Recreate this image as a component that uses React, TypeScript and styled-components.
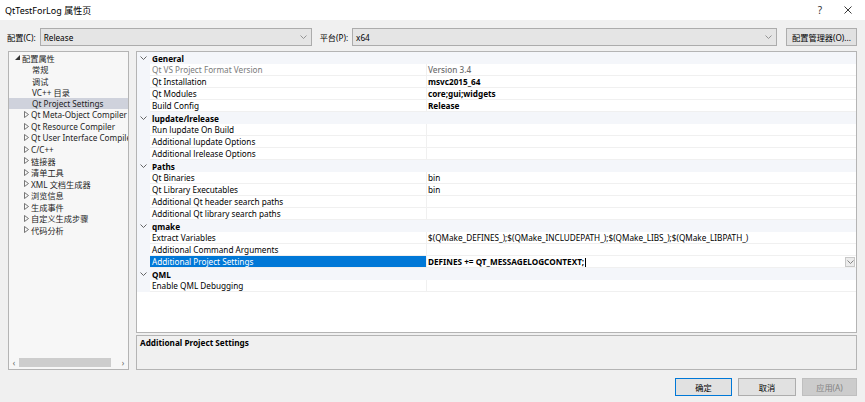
import React from 'react';
import styled, { createGlobalStyle } from 'styled-components';

const Global = createGlobalStyle`
  html, body { margin: 0; padding: 0; }
  body { background: #f0f0f0; font-family: "Noto Sans", "Noto Sans CJK SC", sans-serif; }
`;

const FONT = `"Noto Sans", "Noto Sans CJK SC", sans-serif`;

const Window = styled.div`
  width: 865px;
  height: 402px;
  background: #f0f0f0;
  display: flex;
  flex-direction: column;
  overflow: hidden;
  font-family: ${FONT};
  font-size: 8.2px;
  color: #000;
`;

const TitleBar = styled.div`
  height: 20px;
  background: #fff;
  display: flex;
  align-items: center;
  padding: 0 3px 0 5px;
  font-size: 9px;
`;
const Title = styled.div`flex: 1;`;
const TitleBtn = styled.div`
  width: 28px;
  display: flex;
  align-items: center;
  justify-content: center;
  color: #333;
  font-size: 10px;
`;

const ConfigRow = styled.div`
  margin-top: 8px;
  height: 18px;
  display: flex;
  align-items: center;
  padding: 0 8px 0 7px;
`;
const FieldLabel = styled.span<{ $ml?: number }>`
  margin-left: ${p => p.$ml ?? 0}px;
  margin-right: 4px;
  white-space: nowrap;
`;
const Combo = styled.div<{ $w?: number }>`
  ${p => (p.$w ? `width: ${p.$w}px;` : 'flex: 1;')}
  height: 18px;
  box-sizing: border-box;
  background: #e5e5e5;
  border: 1px solid #acacac;
  display: flex;
  align-items: center;
  justify-content: space-between;
  padding: 0 4px 0 3px;
`;
const Button = styled.div<{ $w: number; $ml?: number; $variant?: 'default' | 'primary' | 'disabled' }>`
  width: ${p => p.$w}px;
  margin-left: ${p => p.$ml ?? 0}px;
  height: 18px;
  box-sizing: border-box;
  display: flex;
  align-items: center;
  justify-content: center;
  background: ${p => (p.$variant === 'disabled' ? '#cccccc' : '#e1e1e1')};
  border: 1px solid ${p => (p.$variant === 'primary' ? '#0078d7' : p.$variant === 'disabled' ? '#bfbfbf' : '#adadad')};
  color: ${p => (p.$variant === 'disabled' ? '#838383' : '#000')};
  white-space: nowrap;
`;

const Main = styled.div`
  margin-top: 5px;
  height: 319px;
  display: flex;
  gap: 7px;
  padding: 0 8px;
`;

const Tree = styled.div`
  width: 121px;
  box-sizing: border-box;
  border: 1px solid #b4b4b4;
  background: #f7f7f7;
  display: flex;
  flex-direction: column;
  overflow: hidden;
`;
const TreeList = styled.div`
  flex: 1;
  overflow: hidden;
`;
const TreeItem = styled.div<{ $indent: number; $selected?: boolean }>`
  height: 11.46px;
  display: flex;
  align-items: center;
  padding-left: ${p => p.$indent}px;
  white-space: nowrap;
  background: ${p => (p.$selected ? '#cfd2dc' : 'transparent')};
  color: #1e1e1e;
`;
const Expander = styled.span`
  width: 7px;
  display: inline-flex;
  align-items: center;
  justify-content: flex-start;
  flex-shrink: 0;
`;
const HScroll = styled.div`
  height: 11px;
  margin: 0 0 1px 0;
  display: flex;
  align-items: center;
  color: #606060;
  font-size: 8px;
`;
const ScrollArrow = styled.span`
  width: 10px;
  display: flex;
  justify-content: center;
`;
const ScrollTrack = styled.div`
  flex: 1;
  height: 9px;
  display: flex;
`;
const ScrollThumb = styled.div`
  width: 92px;
  height: 9px;
  background: #cdcdcd;
`;

const RightCol = styled.div`
  flex: 1;
  display: flex;
  flex-direction: column;
  gap: 2px;
`;
const Grid = styled.div`
  height: 282px;
  box-sizing: border-box;
  border: 1px solid #b4b4b4;
  background: #fff;
  overflow: hidden;
`;
const Row = styled.div<{ $cat?: boolean }>`
  height: 12px;
  display: grid;
  grid-template-columns: 13px 277px 1fr;
  background: ${p => (p.$cat ? '#f4f6fa' : '#fff')};
`;
const Gutter = styled.div`
  background: #f4f6fa;
  display: flex;
  align-items: center;
  justify-content: center;
`;
const CatName = styled.div`
  grid-column: 2 / 4;
  display: flex;
  align-items: center;
  padding-left: 2px;
  font-weight: 700;
`;
const NameCell = styled.div<{ $sel?: boolean; $dim?: boolean }>`
  display: flex;
  align-items: center;
  padding-left: 2px;
  white-space: nowrap;
  box-sizing: border-box;
  border-bottom: 1px solid #f0f0f0;
  border-right: 1px solid #f0f0f0;
  background: ${p => (p.$sel ? '#0078d7' : 'transparent')};
  color: ${p => (p.$sel ? '#fff' : p.$dim ? '#7a7a7a' : '#000')};
`;
const ValueCell = styled.div<{ $bold?: boolean; $dim?: boolean }>`
  display: flex;
  align-items: center;
  justify-content: space-between;
  padding-left: 1px;
  white-space: nowrap;
  box-sizing: border-box;
  border-bottom: 1px solid #f0f0f0;
  font-weight: ${p => (p.$bold ? 700 : p.$dim ? 500 : 400)};
  color: ${p => (p.$dim ? '#6d6d6d' : '#000')};
`;
const Caret = styled.span`
  display: inline-block;
  width: 1px;
  height: 9px;
  background: #000;
  margin-left: 1px;
  vertical-align: middle;
`;
const DropBtn = styled.div`
  width: 10px;
  height: 10px;
  margin-right: 1px;
  box-sizing: border-box;
  border: 1px solid #c8c8c8;
  background: #ececec;
  display: flex;
  align-items: center;
  justify-content: center;
`;

const Desc = styled.div`
  height: 35px;
  box-sizing: border-box;
  border: 1px solid #b4b4b4;
  background: #f0f0f0;
  padding: 1px 3px;
  font-weight: 700;
`;

const Footer = styled.div`
  margin-top: 8px;
  display: flex;
  justify-content: flex-end;
  gap: 6px;
  padding-right: 8px;
`;

const Chevron = ({ color = '#8a8a8a' }: { color?: string }) => (
  <svg width="7" height="4" viewBox="0 0 7 4">
    <path d="M0.5 0.5 L3.5 3.5 L6.5 0.5" fill="none" stroke={color} strokeWidth="0.9" />
  </svg>
);

const TriOpen = () => (
  <svg width="5" height="5" viewBox="0 0 5 5">
    <path d="M5 0 L5 5 L0 5 Z" fill="#333" />
  </svg>
);
const TriClosed = () => (
  <svg width="5" height="7" viewBox="0 0 5 7">
    <path d="M0.5 0.5 L4.5 3.5 L0.5 6.5 Z" fill="none" stroke="#555" strokeWidth="0.8" />
  </svg>
);

type TreeNode = { label: string; indent: number; exp?: 'open' | 'closed'; selected?: boolean };
const treeNodes: TreeNode[] = [
  { label: '配置属性', indent: 6, exp: 'open' },
  { label: '常规', indent: 23 },
  { label: '调试', indent: 23 },
  { label: 'VC++ 目录', indent: 23 },
  { label: 'Qt Project Settings', indent: 23, selected: true },
  { label: 'Qt Meta-Object Compiler', indent: 15, exp: 'closed' },
  { label: 'Qt Resource Compiler', indent: 15, exp: 'closed' },
  { label: 'Qt User Interface Compiler', indent: 15, exp: 'closed' },
  { label: 'C/C++', indent: 15, exp: 'closed' },
  { label: '链接器', indent: 15, exp: 'closed' },
  { label: '清单工具', indent: 15, exp: 'closed' },
  { label: 'XML 文档生成器', indent: 15, exp: 'closed' },
  { label: '浏览信息', indent: 15, exp: 'closed' },
  { label: '生成事件', indent: 15, exp: 'closed' },
  { label: '自定义生成步骤', indent: 15, exp: 'closed' },
  { label: '代码分析', indent: 15, exp: 'closed' },
];

type Prop = { name: string; value?: string; bold?: boolean; dim?: boolean; selected?: boolean };
type Cat = { title: string; props: Prop[] };
const cats: Cat[] = [
  {
    title: 'General',
    props: [
      { name: 'Qt VS Project Format Version', value: 'Version 3.4', dim: true },
      { name: 'Qt Installation', value: 'msvc2015_64', bold: true },
      { name: 'Qt Modules', value: 'core;gui;widgets', bold: true },
      { name: 'Build Config', value: 'Release', bold: true },
    ],
  },
  {
    title: 'lupdate/lrelease',
    props: [
      { name: 'Run lupdate On Build' },
      { name: 'Additional lupdate Options' },
      { name: 'Additional lrelease Options' },
    ],
  },
  {
    title: 'Paths',
    props: [
      { name: 'Qt Binaries', value: 'bin' },
      { name: 'Qt Library Executables', value: 'bin' },
      { name: 'Additional Qt header search paths' },
      { name: 'Additional Qt library search paths' },
    ],
  },
  {
    title: 'qmake',
    props: [
      { name: 'Extract Variables', value: '$(QMake_DEFINES_);$(QMake_INCLUDEPATH_);$(QMake_LIBS_);$(QMake_LIBPATH_)' },
      { name: 'Additional Command Arguments' },
      { name: 'Additional Project Settings', value: 'DEFINES += QT_MESSAGELOGCONTEXT;', bold: true, selected: true },
    ],
  },
  {
    title: 'QML',
    props: [{ name: 'Enable QML Debugging' }],
  },
];

export default function App() {
  return (
    <Window>
      <Global />
      <TitleBar>
        <Title>QtTestForLog 属性页</Title>
        <TitleBtn>?</TitleBtn>
        <TitleBtn>
          <svg width="8" height="8" viewBox="0 0 8 8">
            <path d="M0.5 0.5 L7.5 7.5 M7.5 0.5 L0.5 7.5" stroke="#222" strokeWidth="0.9" />
          </svg>
        </TitleBtn>
      </TitleBar>

      <ConfigRow>
        <FieldLabel>配置(C):</FieldLabel>
        <Combo $w={272}>
          <span>Release</span>
          <Chevron />
        </Combo>
        <FieldLabel $ml={8}>平台(P):</FieldLabel>
        <Combo>
          <span>x64</span>
          <Chevron />
        </Combo>
        <Button $w={71} $ml={9}>配置管理器(O)...</Button>
      </ConfigRow>

      <Main>
        <Tree>
          <TreeList>
            {treeNodes.map(n => (
              <TreeItem key={n.label} $indent={n.indent} $selected={n.selected}>
                {n.exp && <Expander>{n.exp === 'open' ? <TriOpen /> : <TriClosed />}</Expander>}
                {n.label}
              </TreeItem>
            ))}
          </TreeList>
          <HScroll>
            <ScrollArrow>‹</ScrollArrow>
            <ScrollTrack>
              <ScrollThumb />
            </ScrollTrack>
            <ScrollArrow>›</ScrollArrow>
          </HScroll>
        </Tree>

        <RightCol>
          <Grid>
            {cats.map(c => (
              <React.Fragment key={c.title}>
                <Row $cat>
                  <Gutter>
                    <Chevron color="#555" />
                  </Gutter>
                  <CatName>{c.title}</CatName>
                </Row>
                {c.props.map(p => (
                  <Row key={p.name}>
                    <Gutter />
                    <NameCell $sel={p.selected} $dim={p.dim}>{p.name}</NameCell>
                    <ValueCell $bold={p.bold} $dim={p.dim}>
                      <span>
                        {p.value ?? ''}
                        {p.selected && <Caret />}
                      </span>
                      {p.selected && (
                        <DropBtn>
                          <Chevron color="#777" />
                        </DropBtn>
                      )}
                    </ValueCell>
                  </Row>
                ))}
              </React.Fragment>
            ))}
          </Grid>
          <Desc>Additional Project Settings</Desc>
        </RightCol>
      </Main>

      <Footer>
        <Button $w={57} $variant="primary">确定</Button>
        <Button $w={58}>取消</Button>
        <Button $w={55} $variant="disabled">应用(A)</Button>
      </Footer>
    </Window>
  );
}
